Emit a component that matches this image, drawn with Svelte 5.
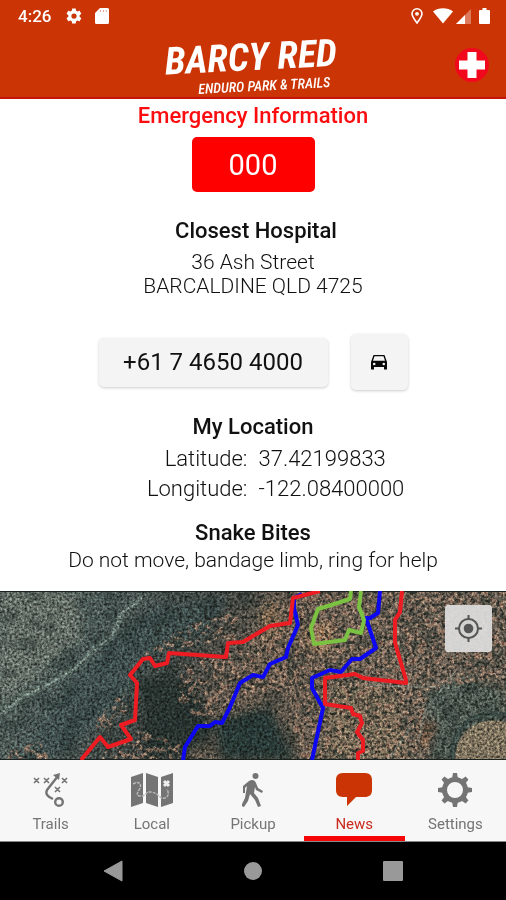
<script>
  const tabs = [
    { id: 'trails', label: 'Trails' },
    { id: 'local', label: 'Local' },
    { id: 'pickup', label: 'Pickup' },
    { id: 'news', label: 'News' },
    { id: 'settings', label: 'Settings' }
  ];
  let active = $state('news');
</script>

<div class="app">
  <header>
    <div class="status">
      <span class="time">4:26</span>
      <svg width="18" height="18" viewBox="0 0 24 24" fill="#fff"><path d="M19.4 13c.1-.7.1-1.300 0-2l2.100-1.600c.2-.2.3-.4.100-.7l-2-3.400c-.1-.3-.4-.3-.6-.2l-2.500 1c-.5-.4-1.100-.7-1.700-1L14.400 2.500c0-.3-.2-.5-.5-.5h-4c-.3 0-.5.2-.5.500L9 5.100c-.6.300-1.200.600-1.700 1l-2.500-1c-.2-.1-.5 0-.6.200l-2 3.400c-.1.300-.1.500.1.700L4.500 11c-.1.700-.1 1.300 0 2l-2.200 1.600c-.2.200-.2.400-.1.700l2 3.400c.1.300.4.300.6.200l2.500-1c.5.400 1.100.700 1.700 1l.4 2.600c0 .3.200.5.500.5h4c.3 0 .5-.2.5-.5l.4-2.600c.6-.3 1.200-.6 1.700-1l2.500 1c.2.100.5 0 .6-.2l2-3.400c.1-.3.100-.5-.1-.7zM12 15.500a3.500 3.500 0 1 1 0-7 3.500 3.500 0 0 1 0 7z"/></svg>
      <svg class="sd" width="14" height="16" viewBox="0 0 14 16"><path d="M5 0h7.500A1.500 1.500 0 0 1 14 1.500v13a1.500 1.500 0 0 1-1.500 1.500h-11A1.500 1.500 0 0 1 0 14.500V5z" fill="#fff"/><path d="M5.500 2v2M8.500 2v2M11.300 2v2" stroke="#cb3505" opacity=".45"/></svg>
      <span class="spacer"></span>
      <svg width="12" height="16" viewBox="0 0 12 16" fill="none" stroke="#fff"><path d="M6 15C3 11 1 8.500 1 5.800a5 5 0 0 1 10 0C11 8.500 9 11 6 15z" stroke-width="1.600"/><circle cx="6" cy="5.800" r="1.900" fill="#fff" stroke="none"/></svg>
      <svg class="wifi" width="20" height="16" viewBox="0 0 20 16"><path d="M10 15.500 0 3.500C5.500-.8 14.500-.8 20 3.500z" fill="#fff"/></svg>
      <svg class="cell" width="15" height="15" viewBox="0 0 15 15"><path d="M0 15 15 0v15z" fill="#fff" opacity=".35"/><path d="M0 15 9 6v9z" fill="#fff"/></svg>
      <svg class="battery" width="11" height="16" viewBox="0 0 11 16"><path d="M3.500 0h4v2H10a1 1 0 0 1 1 1v12a1 1 0 0 1-1 1H1a1 1 0 0 1-1-1V3a1 1 0 0 1 1-1h2.500z" fill="#fff"/></svg>
    </div>
    <div class="brand">
      <div class="logo">
        <span class="name">BARCY RED</span>
        <span class="sub">ENDURO PARK &amp; TRAILS</span>
      </div>
      <button class="aid" aria-label="Emergency">
        <svg width="34" height="34" viewBox="0 0 34 34"><circle cx="17" cy="17" r="17" fill="#f1081c"/><path d="M12.500 4h9v8.500H30v9h-8.500V30h-9v-8.500H4v-9h8.500z" fill="#fff"/></svg>
      </button>
    </div>
  </header>

  <main>
    <h1>Emergency Information</h1>
    <button class="zero">000</button>

    <h2 class="hospital">Closest Hospital</h2>
    <address>36 Ash Street<br />BARCALDINE QLD 4725</address>
    <div class="actions">
      <button class="phone">+61 7 4650 4000</button>
      <button class="car" aria-label="Directions">
        <svg width="18" height="17" viewBox="0 0 18 17"><path d="M3.500 1h11L17 8v7.500h-3V13H4v2.500H1V8z" fill="#080808"/><path d="M4.500 2.300h9L15 6.800H3z" fill="#f4f4f4"/><circle cx="4.200" cy="10" r="1.300" fill="#f4f4f4"/><circle cx="13.800" cy="10" r="1.300" fill="#f4f4f4"/></svg>
      </button>
    </div>

    <h2>My Location</h2>
    <dl>
      <dt>Latitude:</dt><dd>37.42199833</dd>
      <dt>Longitude:</dt><dd>-122.08400000</dd>
    </dl>

    <h2>Snake Bites</h2>
    <p>Do not move, bandage limb, ring for help</p>
  </main>

  <section class="map" aria-label="Trail map">
    <svg viewBox="0 0 506 169" preserveAspectRatio="xMidYMid slice">
      <defs>
        <linearGradient id="land" x1="0" y1="0" x2="1" y2=".18">
          <stop offset="0" stop-color="#5b6660"/><stop offset=".22" stop-color="#4a5754"/>
          <stop offset=".42" stop-color="#434845"/><stop offset=".56" stop-color="#685c50"/><stop offset="1" stop-color="#6d6357"/>
        </linearGradient>
        <filter id="soft" x="-20%" y="-20%" width="140%" height="140%"><feGaussianBlur stdDeviation="4"/></filter>
        <!-- bare red soil showing between the scrub -->
        <filter id="soil" x="0" y="0" width="100%" height="100%" color-interpolation-filters="sRGB">
          <feTurbulence type="fractalNoise" baseFrequency=".16" numOctaves="3" seed="21" result="n"/>
          <feColorMatrix in="n" values="0 0 0 0 .62  0 0 0 0 .49  0 0 0 0 .41  8 0 0 0 -4" result="c"/>
          <feComposite in="c" in2="SourceAlpha" operator="in"/>
        </filter>
        <!-- dark scrub clumps -->
        <filter id="scrub" x="0" y="0" width="100%" height="100%" color-interpolation-filters="sRGB">
          <feTurbulence type="fractalNoise" baseFrequency=".24" numOctaves="2" seed="5" result="n"/>
          <feColorMatrix in="n" values="0 0 0 0 .14  0 0 0 0 .17  0 0 0 0 .15  0 9 0 0 -5" result="c"/>
          <feComposite in="c" in2="SourceAlpha" operator="in"/>
        </filter>
        <filter id="haze" x="0" y="0" width="100%" height="100%" color-interpolation-filters="sRGB">
          <feTurbulence type="fractalNoise" baseFrequency=".05" numOctaves="4" seed="9"/>
          <feColorMatrix values="0 0 0 0 .13  0 0 0 0 .18  0 0 0 0 .17  5 0 0 0 -2.400"/>
        </filter>
        <filter id="grain" x="0" y="0" width="100%" height="100%" color-interpolation-filters="sRGB">
          <feTurbulence type="fractalNoise" baseFrequency=".4" numOctaves="3" seed="4"/>
          <feColorMatrix values="1.600 0 0 0 -.3  1.600 0 0 0 -.3  1.600 0 0 0 -.3  0 0 0 0 1"/>
        </filter>
      </defs>
      <rect width="506" height="169" fill="url(#land)"/>
      <g filter="url(#soft)">
        <path d="M0 0H75L82 45 35 88 0 110z" fill="#656e66"/>
        <path d="M80 80 150 18 230 5 205 45 150 65 125 110 90 140 50 169H20z" fill="#40504e"/>
        <path d="M140 88 190 85 215 140 180 169H145z" fill="#2b3633"/>
        <path d="M215 130 270 115 295 169H220z" fill="#2b3a37"/>
        <path d="M262 20 275 10 282 40 265 55zM302 35 335 32 330 62 305 60z" fill="#a5805f"/>
        <path d="M335 90 395 100 410 169H325z" fill="#7c6e5a"/>
        <path d="M425 100 460 85 506 100V169H430z" fill="#525d55"/>
        <path d="M420 135 435 132 425 160z" fill="#a87352"/>
      </g>
      <rect width="506" height="169" filter="url(#haze)" opacity=".35"/>
      <g filter="url(#soil)" opacity=".75">
        <path d="M180 72 245 58 300 0H506V85L430 100 415 169H300L285 100 235 105 205 135 178 110z"/>
        <path d="M108 155 140 140 180 150 185 169H100zM140 66 185 35 240 20 235 50 170 58zM95 130 125 98 128 120 100 148zM10 160 40 150 50 169H5z"/>
      </g>
      <g filter="url(#scrub)" opacity=".75">
        <path d="M175 0H506V169H90L135 80z"/>
      </g>
      <path d="M455 169c0-28 22-45 51-38v38z" fill="#7d725e"/>
      <path d="M452 169c-2-31 22-52 54-45" fill="none" stroke="#3c4a45" stroke-width="5"/>
      <g fill="none" stroke="#84948b" stroke-linejoin="round">
        <path d="M0 123 25 104 48 94 75 77 95 58 112 45 122 22 143 6" stroke-width="7" opacity=".2"/>
        <path d="M0 123 25 104 48 94 75 77 95 58 112 45 122 22 143 6" stroke-width="2" opacity=".6"/>
        <path d="M0 44 28 23M77 77 88 28 112 14" stroke-width="2" opacity=".25"/>
        <path d="M366 94 450 97M388 169 411 136M419 151 424 122 455 80" stroke-width="2" opacity=".4"/>
      </g>
      <rect class="noise" width="506" height="169" filter="url(#grain)"/>
      <path d="M0 168.500H506M0 .5H506" stroke="#1b2220"/>
      <g fill="none" stroke-width="4" stroke-linejoin="round">
        <path stroke="#0d08ef" d="M183 169 185 156 198 135H210L215 131 222 132 230 116 240 92 253 84 263 86 270 73 286 66 288 57 298 34 294 17V7L302 3M380 0 378 22 370 27H366L376 57 360 68H352L341 81 330 79 312 87V97L323 117 312 169"/>
        <path stroke="#ed1c22" d="M81 169 100 146 108 156 131 148 121 134 135 129 137 92 130 84 143 68 150 67 155 75 167 72 169 62 226 66 228 52 243 51 253 45 270 35 290 32 293 7 320 0M402 0 400 21 395 29V52L406 89V92L363 87 355 83 325 87V113L351 117 353 123 360 125 362 132 357 141 363 149V160L358 162V169"/>
        <path stroke="#7bc142" d="M351 0 350 8 328 15 318 18 311 37 314 53 345 49 349 39 361 42 364 29 359 16 361 0"/>
      </g>
    </svg>
    <button class="locate" aria-label="Find my location">
      <svg width="27" height="27" viewBox="0 0 27 27" fill="none" stroke="#555" stroke-width="2"><circle cx="13.500" cy="13.500" r="9.500"/><circle cx="13.500" cy="13.500" r="4.800" fill="#555" stroke="none"/><path d="M13.500 0v4M13.500 23v4M0 13.500h4M23 13.500h4"/></svg>
    </button>
  </section>

  <nav class="tabs">
    {#each tabs as tab}
      <button class:active={active === tab.id} onclick={() => (active = tab.id)}>
        {#if tab.id === 'trails'}
          <svg width="36" height="36" viewBox="0 0 36 36" fill="none" stroke="#747474"><path d="m1 6 5 5m0-5-5 5m10-5 5 5m0-5-5 5m18-5 5 5m0-5-5 5m-7 4 5 5m0-5-5 5" stroke-width="1.600"/><path d="M25 4 14 18c-2 4 1 7 6 9" stroke-width="2.400"/><path d="m20 3 7-2-1 7z" fill="#747474" stroke="none"/><circle cx="26" cy="30" r="3.800" stroke-width="2.400"/></svg>
        {:else if tab.id === 'local'}
          <svg width="44" height="36" viewBox="0 0 44 36"><path d="M1 5 13 1v30L1 35zm15-4 12 4v30l-12-4zm15 4 12-4v30l-12 4z" fill="#747474"/><path d="M3 12c5-3 9-1 7 4-2 4-5 8 0 8 5 1 6-5 11-4 8 1 9 8 14 6 5-2 3-7 2-9" fill="none" stroke="#b8b8b8" stroke-width="1.500" stroke-dasharray="3 1"/><path d="m34 9 5 5m0-5-5 5" stroke="#eee" stroke-width="3"/></svg>
        {:else if tab.id === 'pickup'}
          <svg width="22" height="36" viewBox="0 0 22 36"><circle cx="13.500" cy="4" r="3" fill="#747474"/><path d="M7 9c3-2 6-1 7 2l2 5 5 3-1 2-6-3-1-3-1 6 4 5 3 8-3 1-3-7-5-6-2 7-4 6-3-1 4-8 2-12-2 2v5H1v-7z" fill="#747474"/></svg>
        {:else if tab.id === 'news'}
          <svg width="38" height="36" viewBox="0 0 38 36"><path d="M8 1h22c5 0 7 3 7 7v10c0 5-3 7-7 7h-9l-9 9V25H8c-5 0-7-3-7-7V8c0-4 2-7 7-7z" fill="#cb3505"/></svg>
        {:else}
          <svg width="36" height="36" viewBox="0 0 36 36" fill="#747474"><path fill-rule="evenodd" d="M18 5a13 13 0 1 0 0 26 13 13 0 0 0 0-26zm0 5a8 8 0 1 1 0 16 8 8 0 0 1 0-16z"/>{#each [0, 45, 90, 135, 180, 225, 270, 315] as a}<path d="M15 7 16 1h4l1 6z" transform="rotate({a} 18 18)"/>{/each}</svg>
        {/if}
        <span>{tab.label}</span>
      </button>
    {/each}
  </nav>

  <footer>
    <button aria-label="Back"><svg width="20" height="22" viewBox="0 0 20 22"><path d="M19 1v20L1 11z" fill="#999" stroke="#999" stroke-linejoin="round"/></svg></button>
    <button aria-label="Home"><svg width="20" height="20" viewBox="0 0 20 20"><circle cx="10" cy="10" r="9" fill="#999"/></svg></button>
    <button aria-label="Recent apps"><svg width="20" height="20" viewBox="0 0 20 20"><rect width="20" height="20" rx="1" fill="#999"/></svg></button>
  </footer>
</div>

<style>
  .app {
    min-height: 100vh;
    display: flex;
    flex-direction: column;
    background: #fff;
    color: #111;
    font-family: Roboto, 'Liberation Sans', sans-serif;
  }
  button {
    border: 0;
    padding: 0;
    margin: 0;
    background: none;
    color: inherit;
    font: inherit;
    cursor: pointer;
  }
  svg {
    display: block;
    flex: none;
  }
  header {
    background: #cb3505;
    border-bottom: 2px solid #c4140b;
    color: #fff;
  }
  .status {
    height: 32px;
    display: flex;
    align-items: center;
    padding: 0 16px 0 18px;
    box-sizing: border-box;
  }
  .time {
    width: 47px;
    font-size: 17px;
    font-weight: 500;
  }
  .sd { margin-left: 12px; }
  .spacer { flex: 1; }
  .wifi { margin-left: 10px; }
  .cell { margin-left: 3px; }
  .battery { margin-left: 8px; }
  .brand {
    height: 65px;
    display: grid;
    grid-template-columns: 1fr auto 1fr;
    align-items: center;
    padding: 0 17px;
  }
  .logo {
    grid-column: 2;
    display: flex;
    flex-direction: column;
    align-items: center;
    padding-right: 4px;
    transform: rotate(-3deg);
    font-family: 'Roboto Condensed', 'Liberation Sans Narrow', 'Liberation Sans', sans-serif;
    font-style: italic;
    font-weight: 700;
    white-space: nowrap;
  }
  .name {
    font-size: 38px;
    line-height: 42px;
  }
  .sub {
    align-self: flex-end;
    padding-right: 8px;
    font-size: 14px;
    font-weight: 500;
    line-height: 16px;
  }
  .aid {
    justify-self: end;
    border-radius: 50%;
  }
  main {
    display: flex;
    flex-direction: column;
    align-items: center;
    padding: 4px 16px 18px;
    text-align: center;
    font-size: 21px;
    font-weight: 300;
    line-height: 24px;
  }
  h1, h2 {
    margin: 0;
    font-size: 22px;
    line-height: 26px;
    font-weight: 500;
  }
  h1 { color: #fb0d10; }
  .zero {
    margin-top: 8px;
    width: 123px;
    height: 55px;
    border-radius: 5px;
    background: #fe0000;
    color: #fff;
    font-size: 29px;
    font-weight: 400;
  }
  .hospital {
    margin-top: 26px;
    padding-left: 6px;
  }
  address {
    margin-top: 6px;
    font-style: normal;
  }
  .actions {
    display: flex;
    align-items: center;
    gap: 23px;
    margin: 36px 0 24px;
  }
  .phone, .car {
    background: #f4f4f4;
    border-radius: 5px;
    box-shadow: 0 1px 3px rgba(0, 0, 0, .2);
  }
  .phone {
    width: 229px;
    height: 49px;
    font-size: 24px;
    font-weight: 400;
  }
  .car {
    width: 57px;
    height: 56px;
    display: grid;
    place-items: center;
  }
  dl {
    margin: 4px 0 16px;
    display: grid;
    grid-template-columns: 1fr 1fr;
    column-gap: 11px;
    line-height: 30px;
    font-size: 22px;
  }
  dt { text-align: right; }
  dd {
    margin: 0;
    text-align: left;
  }
  p { margin: 2px 0 0; }
  .map {
    position: relative;
    flex: 1 0 168px;
    margin-top: 1px;
    overflow: hidden;
    background: #4b5149;
  }
  .map > svg {
    position: absolute;
    inset: 0;
    width: 100%;
    height: 100%;
  }
  .noise {
    mix-blend-mode: overlay;
    opacity: .6;
  }
  .locate {
    position: absolute;
    top: 14px;
    right: 14px;
    width: 47px;
    height: 47px;
    display: grid;
    place-items: center;
    border-radius: 3px;
    background: rgba(222, 222, 222, .93);
  }
  .tabs {
    display: flex;
    background: #f7f7f7;
    border-bottom: 1px solid #888;
  }
  .tabs button {
    flex: 1;
    height: 81px;
    display: flex;
    flex-direction: column;
    align-items: center;
    box-sizing: border-box;
    padding-top: 12px;
    border-bottom: 5px solid transparent;
    color: #747474;
    font-size: 15px;
    line-height: 20px;
  }
  .tabs span { margin-top: 6px; }
  .tabs .active {
    border-bottom-color: #f50505;
    color: #cb2b1e;
  }
  footer {
    height: 58px;
    display: flex;
    justify-content: center;
    gap: 120px;
    background: #000;
  }
  footer button {
    display: grid;
    place-items: center;
  }
</style>
